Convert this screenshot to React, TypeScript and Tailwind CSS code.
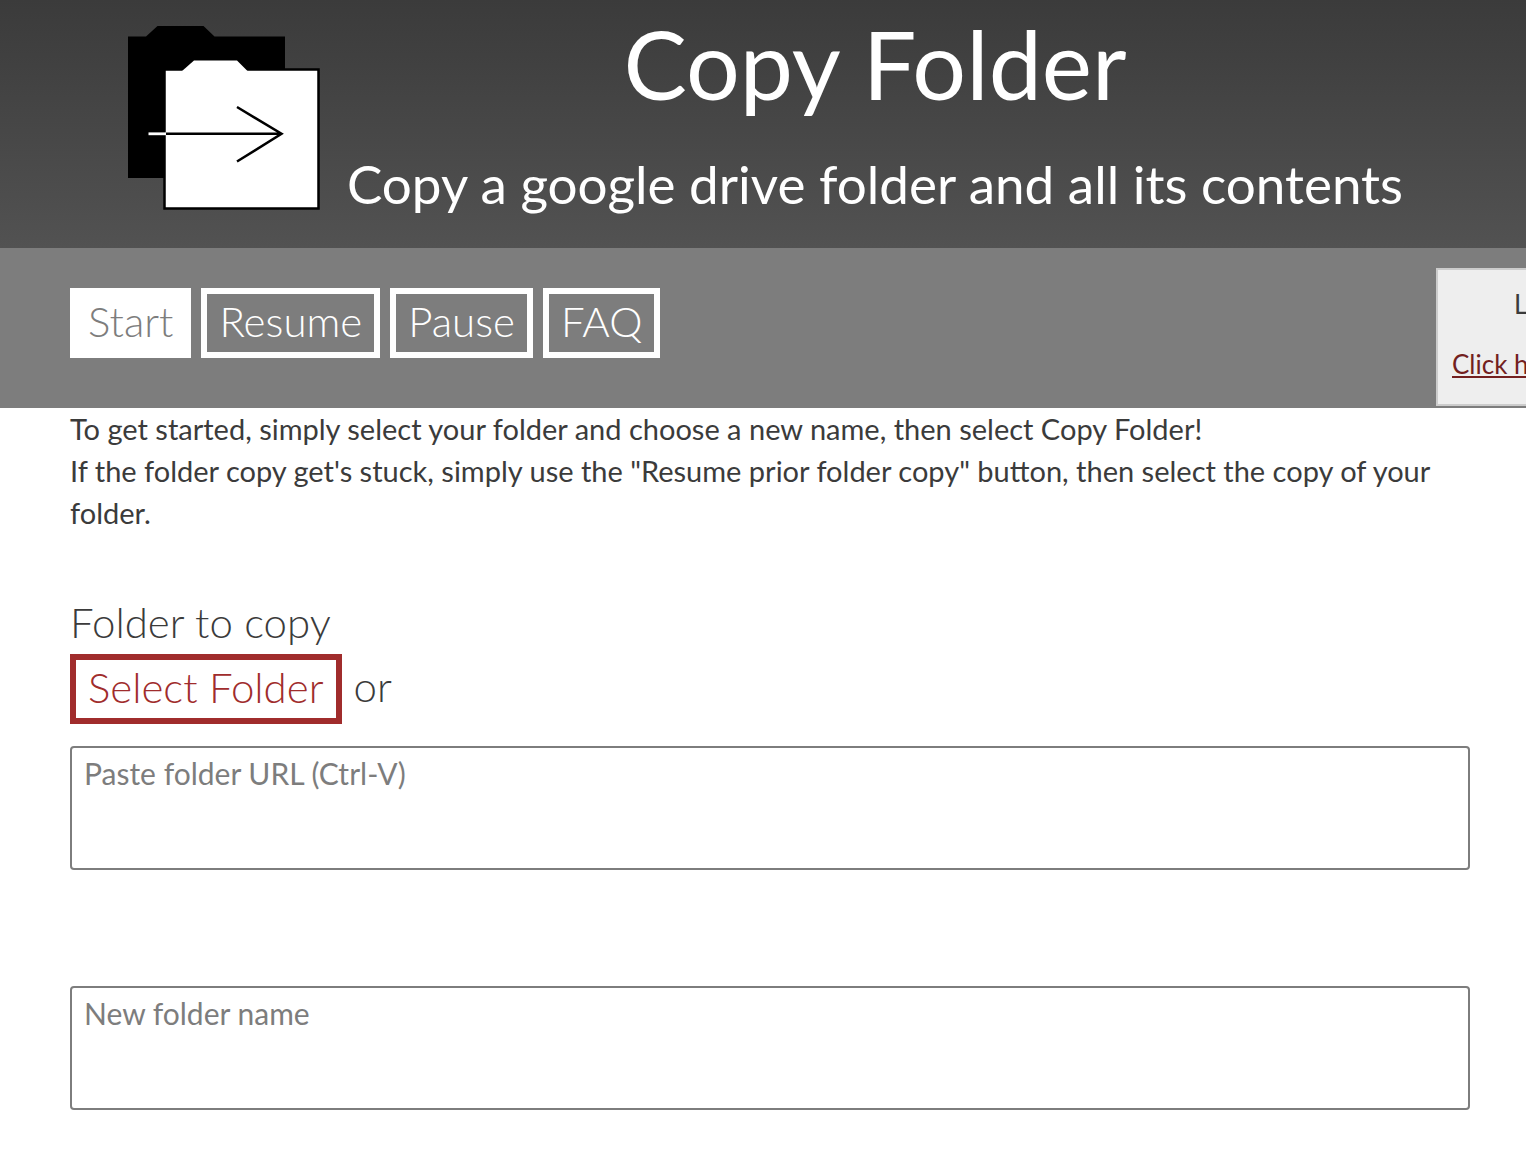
import clsx from "clsx";
import { useState } from "react";

const tabs = ["Start", "Resume", "Pause", "FAQ"];

const Logo = () => (
  <svg viewBox="0 0 192 186" className="h-[186px] w-[192px] shrink-0" aria-hidden="true">
    <path d="M0 11.5H18L29.5 1H75.500L86.500 11.500H157V153H0Z" fill="#000" />
    <path d="M36.5 44.5H190.5V183.5H36.5Z" fill="#fff" stroke="#000" strokeWidth="2.5" />
    <path d="M53.5 46.5L66 35.500H109L120 46.500Z" fill="#fff" />
    <path d="M20.5 108.800H38" stroke="#fff" strokeWidth="2.800" />
    <path d="M38 108.800H153M109 82L153.500 108.800L109 136.500" fill="none" stroke="#000" strokeWidth="2.500" />
  </svg>
);

const Header = () => (
  <header className="flex items-start bg-linear-to-b from-[#3b3b3b] to-[#525252] px-32 pt-[25px] pb-[37px] text-white">
    <Logo />
    <div className="-mr-8 flex-1 text-center whitespace-nowrap">
      <h1 className="text-[95px] leading-[76px]">Copy Folder</h1>
      <h2 className="-mx-4 pt-[57px] text-[53px] leading-[52px]">
        Copy a google drive folder and all its contents
      </h2>
    </div>
  </header>
);

interface NavProps {
  active: string;
  onSelect: (tab: string) => void;
}

const Nav = ({ active, onSelect }: NavProps) => (
  <div className="flex items-start justify-between bg-[#7d7d7d] pl-[70px]">
    <nav className="flex gap-2.5 py-10">
      {tabs.map((tab) => (
        <button
          key={tab}
          type="button"
          onClick={() => onSelect(tab)}
          className={clsx(
            "h-[70px] border-6 border-white px-3 pb-1 text-[42px] leading-[54px] font-light",
            active === tab ? "bg-white text-[#7d7d7d]" : "text-white",
          )}
        >
          {tab}
        </button>
      ))}
    </nav>
    <aside className="mt-5 mb-0.5 h-[138px] w-[90px] overflow-hidden border-2 border-r-0 border-[#ccc] bg-[#eee] pt-4 pl-3.5 text-[26px] leading-[36px] whitespace-nowrap">
      <p className="pl-[62px]">L</p>
      <a href="#" className="mt-6 block text-[#731f1f] underline">
        Click h
      </a>
    </aside>
  </div>
);

export default function App() {
  const [active, setActive] = useState("Start");

  return (
    <div className="min-h-screen overflow-x-hidden bg-white font-['Lato',sans-serif] text-[#3b3b3b]">
      <Header />
      <Nav active={active} onSelect={setActive} />

      <main className="pr-14 pl-[70px]">
        <p className="text-[29px] leading-[42px]">
          To get started, simply select your folder and choose a new name, then
          select Copy Folder!
          <br />
          If the folder copy get's stuck, simply use the "Resume prior folder
          copy" button, then select the copy of your folder.
        </p>

        <form className="pt-[64px]">
          <label htmlFor="folder-url" className="block pb-2 text-[42px] leading-[48px] font-light">
            Folder to copy
          </label>
          <div className="flex items-center gap-3 text-[42px] leading-[54px] font-light">
            <button
              type="button"
              className="h-[70px] border-6 border-[#a02c2c] px-3 pb-1 text-[#a02c2c]"
            >
              Select Folder
            </button>
            <span className="pb-1.5">or</span>
          </div>
          <textarea
            id="folder-url"
            placeholder="Paste folder URL (Ctrl-V)"
            className="mt-[22px] block h-[124px] w-full resize-none rounded-sm border-2 border-[#7d7d7d] px-3 py-1 text-[30px] leading-[42px] placeholder:text-[#7d7d7d]"
          />
          <textarea
            aria-label="New folder name"
            placeholder="New folder name"
            className="mt-[116px] block h-[124px] w-full resize-none rounded-sm border-2 border-[#7d7d7d] px-3 py-1 text-[30px] leading-[42px] placeholder:text-[#7d7d7d]"
          />
        </form>
      </main>
    </div>
  );
}
